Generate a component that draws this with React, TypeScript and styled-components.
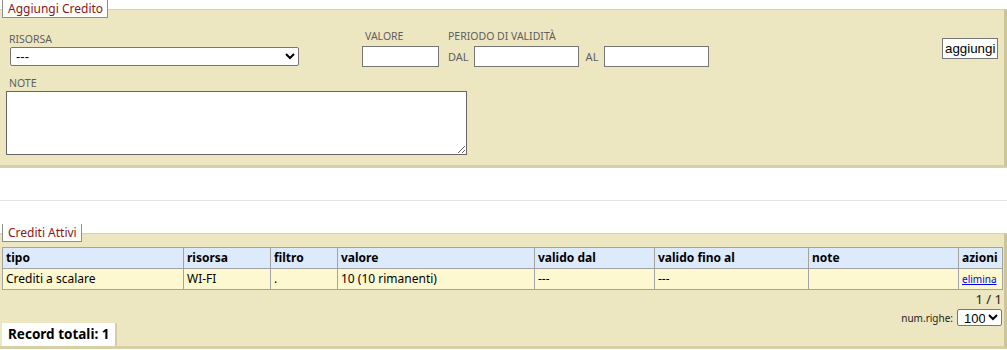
import styled, { createGlobalStyle } from "styled-components";

const GlobalStyle = createGlobalStyle`
  html, body {
    margin: 0;
    padding: 0;
    background: #fff;
  }
  body {
    font-family: "Noto Sans", "DejaVu Sans", sans-serif;
    font-size: 12px;
    color: #000;
  }
`;

const Panel = styled.fieldset`
  margin: 0;
  padding: 0;
  min-width: 0;
  background: #ede7c1;
  border: 0;
  border-top: 1px solid #d8d2ab;
  border-right: 3px solid #ccc59a;
  border-bottom: 3px solid #d7d0a6;
`;

const Legend = styled.legend`
  margin-left: 2px;
  padding: 0 4px 0 5px;
  height: 17px;
  line-height: 17px;
  background: #fff;
  border: 1px solid #8e8e8e;
  border-top: 0;
  color: #8c1616;
  font-size: 12px;
`;

const FormBody = styled.div`
  padding: 11px 6px 10px 6px;
  display: flex;
  flex-direction: column;
  gap: 9px;
`;

const TopRow = styled.div`
  display: flex;
  align-items: flex-start;
`;

const Field = styled.div<{ $gap?: number; $top?: number; $ml?: number }>`
  display: flex;
  flex-direction: column;
  gap: ${(p) => p.$gap ?? 0}px;
  margin-top: ${(p) => p.$top ?? 0}px;
  margin-left: ${(p) => p.$ml ?? 0}px;
`;

const Label = styled.label<{ $flush?: boolean }>`
  font-size: 10.5px;
  line-height: 15px;
  color: #5f5f5f;
  text-transform: uppercase;
  margin-left: ${(p) => (p.$flush ? 0 : 3)}px;
`;

const Select = styled.select<{ $w: number }>`
  width: ${(p) => p.$w}px;
  height: 19px;
  margin-left: 4px;
  padding: 0 1px;
  font-family: "Liberation Sans", Arial, sans-serif;
  font-size: 13px;
  color: #000;
  background: #fff;
  border: 1px solid #767676;
  border-radius: 2px;
`;

const TextInput = styled.input<{ $w: number }>`
  box-sizing: border-box;
  width: ${(p) => p.$w}px;
  height: 21px;
  margin: 0;
  padding: 1px 2px;
  background: #fff;
  border: 1px solid #767676;
  border-radius: 0;
  font-family: "Liberation Sans", Arial, sans-serif;
  font-size: 13px;
`;

const Period = styled.div`
  display: flex;
  align-items: center;
`;

const SmallText = styled.span<{ $ml?: number; $mr?: number }>`
  font-size: 11px;
  color: #5f5f5f;
  margin-left: ${(p) => p.$ml ?? 0}px;
  margin-right: ${(p) => p.$mr ?? 0}px;
`;

const AddButton = styled.button`
  box-sizing: border-box;
  margin: 9px 0 0 auto;
  height: 21px;
  width: 56px;
  padding: 0 2px;
  background: #fff;
  border: 1px solid #767676;
  border-radius: 0;
  color: #000;
  font-family: "Liberation Sans", Arial, sans-serif;
  font-size: 13.33px;
`;

const NoteArea = styled.textarea`
  box-sizing: border-box;
  width: 461px;
  height: 64px;
  margin: 0;
  background: #fff;
  border: 1px solid #666;
  border-radius: 0;
  font-family: "Liberation Mono", monospace;
  font-size: 13px;
`;

const Divider = styled.hr`
  margin: 32px 0 23px;
  height: 0;
  border: 0;
  border-top: 1px solid #e3e3e3;
`;

const ListBody = styled.div`
  padding: 5px 2px 0 2px;
`;

const Grid = styled.table`
  width: 1000px;
  table-layout: fixed;
  border-collapse: collapse;
  border: 1px solid #a3a3a3;
  font-size: 12px;
`;

const Th = styled.th`
  padding: 2px 3px;
  line-height: 16px;
  text-align: left;
  font-weight: 700;
  background: #dceafc;
  border: 1px solid #a3a3a3;
  white-space: nowrap;
  overflow: hidden;
`;

const Td = styled.td`
  padding: 2px 3px;
  line-height: 16px;
  background: #fdf8cf;
  border: 1px solid #a3a3a3;
  white-space: nowrap;
  vertical-align: middle;
`;

const DeleteLink = styled.a`
  font-size: 10px;
  color: #0000ee;
  text-decoration: underline;
  cursor: pointer;
`;

const Footer = styled.div`
  display: flex;
  align-items: flex-start;
  justify-content: space-between;
  margin-top: 1px;
`;

const TotalBox = styled.div`
  margin-top: 32px;
  height: 23px;
  line-height: 23px;
  padding: 0 6px 0 6px;
  background: #fff;
  border-right: 2px solid #d6cfa6;
  font-size: 13.5px;
  font-weight: 700;
`;

const Pager = styled.div`
  display: flex;
  flex-direction: column;
  align-items: flex-end;
`;

const PageInfo = styled.div`
  font-size: 13px;
  line-height: 17px;
  color: #222;
`;

const RowsPicker = styled.div`
  display: flex;
  align-items: center;
  gap: 4px;
  margin-top: 1px;
  font-size: 10px;
  color: #222;
`;

const RowsSelect = styled.select`
  width: 45px;
  height: 17px;
  padding: 0 0 0 2px;
  font-family: "Liberation Sans", Arial, sans-serif;
  font-size: 13px;
  background: #fff;
  border: 1px solid #767676;
  border-radius: 2px;
`;

const columns = [
  { label: "tipo", w: 181 },
  { label: "risorsa", w: 87 },
  { label: "filtro", w: 67 },
  { label: "valore", w: 197 },
  { label: "valido dal", w: 120 },
  { label: "valido fino al", w: 154 },
  { label: "note", w: 150 },
  { label: "azioni", w: 44 },
];

export default function App() {
  return (
    <>
      <GlobalStyle />
      <Panel>
        <Legend>Aggiungi Credito</Legend>
        <FormBody>
          <TopRow>
            <Field $top={3}>
              <Label>Risorsa</Label>
              <Select $w={289}>
                <option>---</option>
              </Select>
            </Field>
            <Field $gap={2} $ml={63}>
              <Label>Valore</Label>
              <TextInput $w={77} />
            </Field>
            <Field $gap={2} $ml={9}>
              <Label $flush>Periodo di validità</Label>
              <Period>
                <SmallText $mr={5}>DAL</SmallText>
                <TextInput $w={105} />
                <SmallText $ml={7} $mr={6}>
                  AL
                </SmallText>
                <TextInput $w={105} />
              </Period>
            </Field>
            <AddButton>aggiungi</AddButton>
          </TopRow>
          <Field>
            <Label>Note</Label>
            <NoteArea />
          </Field>
        </FormBody>
      </Panel>

      <Divider />

      <Panel>
        <Legend>Crediti Attivi</Legend>
        <ListBody>
          <Grid>
            <colgroup>
              {columns.map((c) => (
                <col key={c.label} style={{ width: c.w }} />
              ))}
            </colgroup>
            <thead>
              <tr>
                {columns.map((c) => (
                  <Th key={c.label}>{c.label}</Th>
                ))}
              </tr>
            </thead>
            <tbody>
              <tr>
                <Td>Crediti a scalare</Td>
                <Td>WI-FI</Td>
                <Td>.</Td>
                <Td>10 (10 rimanenti)</Td>
                <Td>---</Td>
                <Td>---</Td>
                <Td></Td>
                <Td>
                  <DeleteLink>elimina</DeleteLink>
                </Td>
              </tr>
            </tbody>
          </Grid>
          <Footer>
            <TotalBox>Record totali: 1</TotalBox>
            <Pager>
              <PageInfo>1 / 1</PageInfo>
              <RowsPicker>
                num.righe:
                <RowsSelect>
                  <option>100</option>
                </RowsSelect>
              </RowsPicker>
            </Pager>
          </Footer>
        </ListBody>
      </Panel>
    </>
  );
}
